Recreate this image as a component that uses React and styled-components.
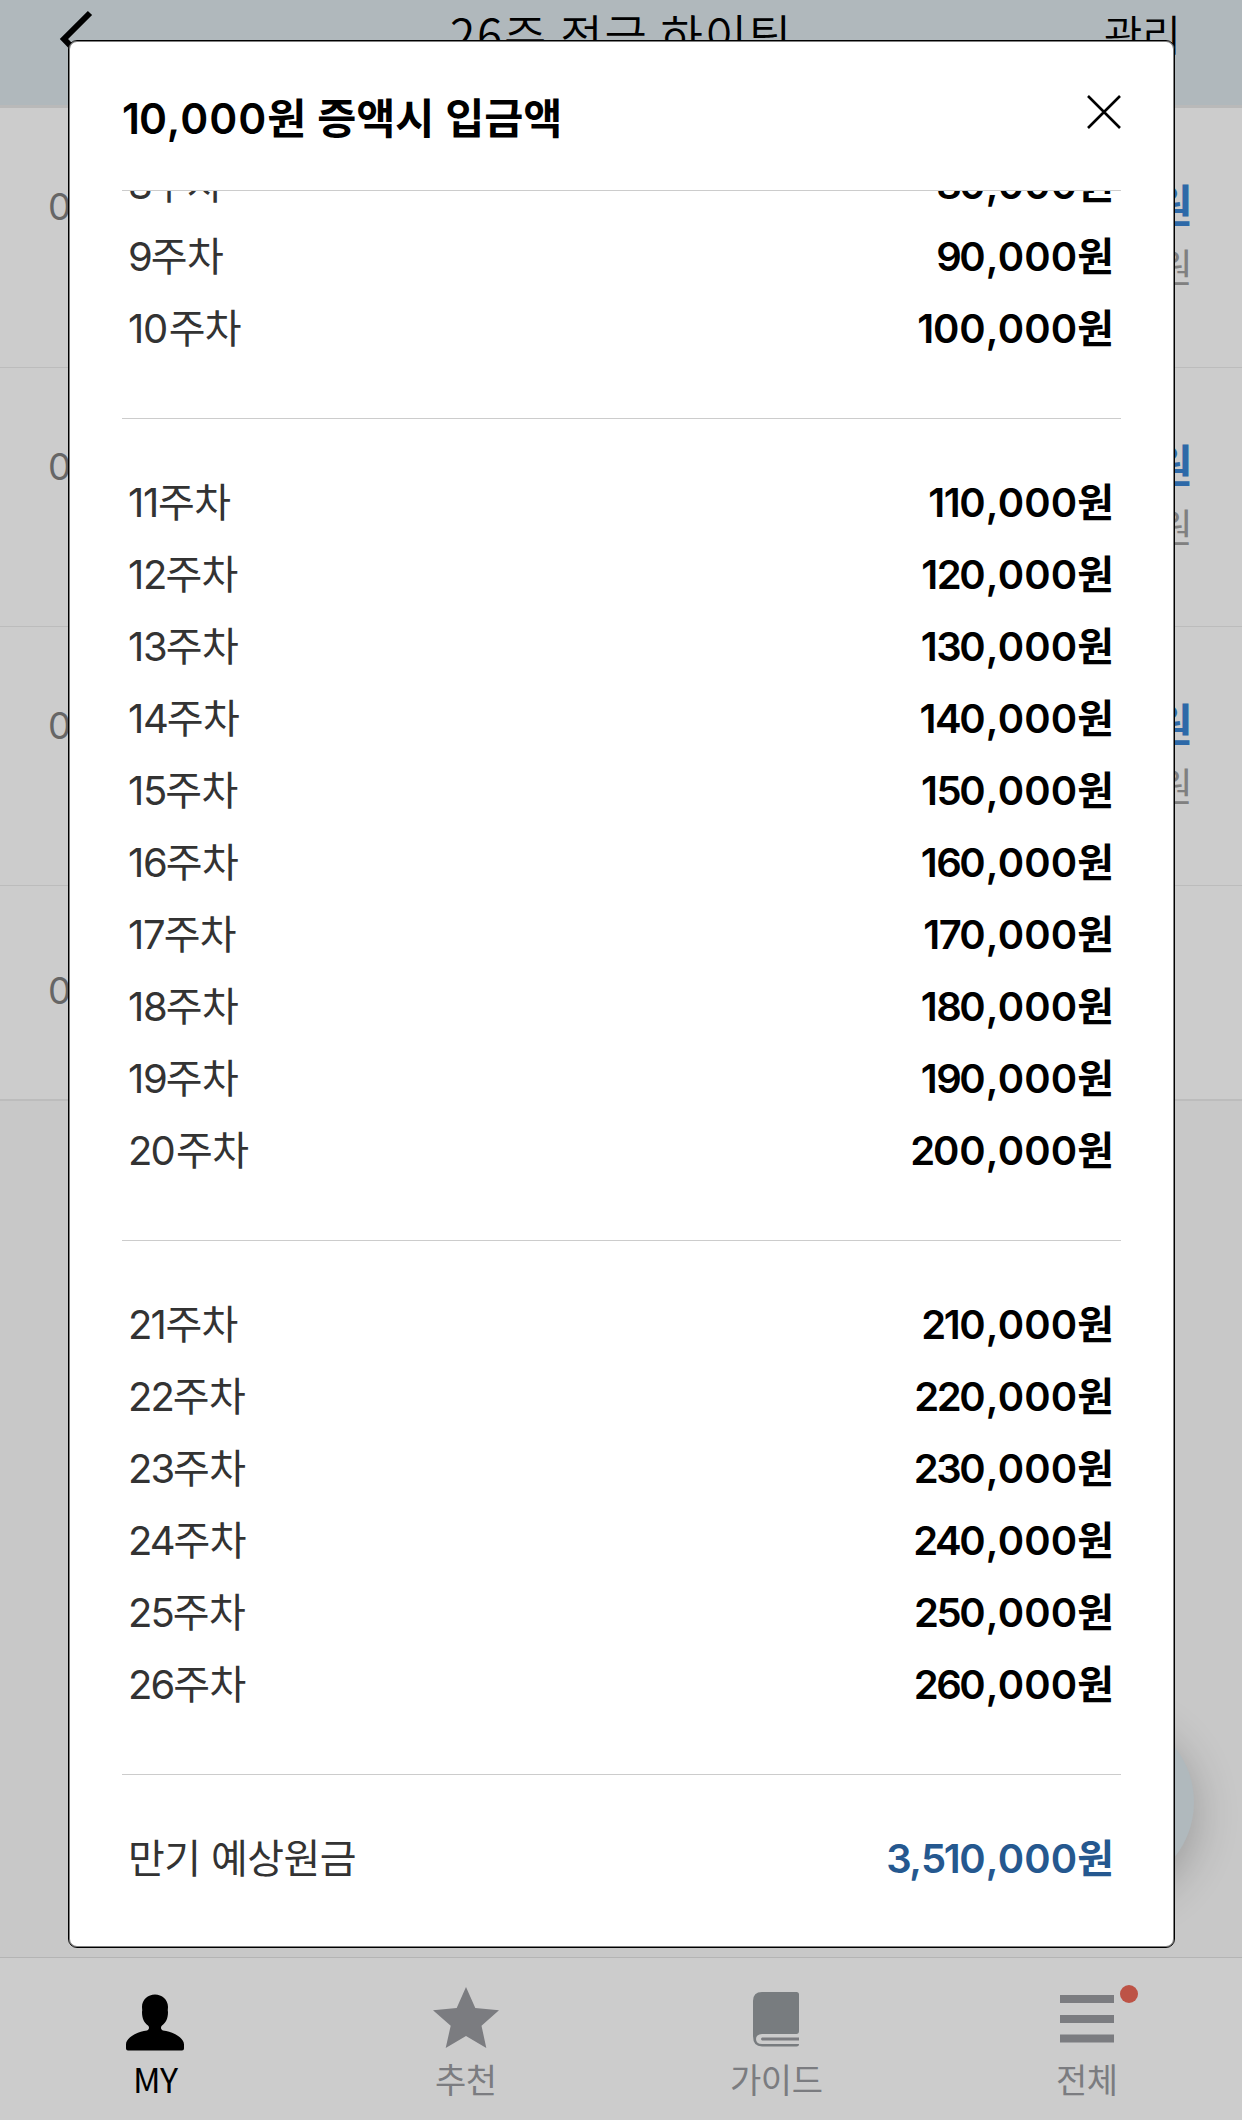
import styled, { createGlobalStyle } from 'styled-components';

const LIST_ROWS = [
  { height: 260, date: '0', amount: true },
  { height: 259, date: '0', amount: true },
  { height: 259, date: '0', amount: true },
  { height: 215, date: '0', amount: false },
];

const GROUPS = [
  [8, 9, 10],
  [11, 12, 13, 14, 15, 16, 17, 18, 19, 20],
  [21, 22, 23, 24, 25, 26],
];

const STEP = 10000;

// digits and hangul need their own tracking
function Text({ children }) {
  return children
    .split(/(1|0+|[2-9]+|,)/)
    .filter(Boolean)
    .map((part, i) => {
      if (part === '1') return <One key={i}>{part}</One>;
      if (part === ',') return <Comma key={i}>{part}</Comma>;
      if (/^0/.test(part)) return <Zeros key={i}>{part}</Zeros>;
      if (/\d/.test(part)) return <Digits key={i}>{part}</Digits>;
      return part;
    });
}

function App() {
  return (
    <Screen>
      <GlobalStyle />
      <Header>
        <BackIcon viewBox="0 0 40 60">
          <path d="M34 3 L8 29 L34 56" />
        </BackIcon>
        <HeaderTitle>26주 적금 하이팅</HeaderTitle>
        <Manage>관리</Manage>
      </Header>
      <List>
        {LIST_ROWS.map(({ height, date, amount }, i) => (
          <ListRow key={i} $height={height}>
            <ListDate>{date}</ListDate>
            {amount && (
              <ListAmounts>
                <Deposit>원</Deposit>
                <Balance>원</Balance>
              </ListAmounts>
            )}
          </ListRow>
        ))}
      </List>
      <Fab />
      <Nav />
      <Modal>
        <ModalHeader>
          <ModalTitle>
            <Text>10,000원 증액시 입금액</Text>
          </ModalTitle>
          <CloseIcon viewBox="0 0 34 34">
            <path d="M1 1 L33 33 M33 1 L1 33" />
          </CloseIcon>
        </ModalHeader>
        <ModalBody>
          {GROUPS.map((weeks) => (
            <Group key={weeks[0]}>
              {weeks.map((week) => (
                <WeekRow key={week}>
                  <Label>
                    <Text>{`${week}주차`}</Text>
                  </Label>
                  <Amount>
                    <Text>{`${(week * STEP).toLocaleString('en-US')}원`}</Text>
                  </Amount>
                </WeekRow>
              ))}
            </Group>
          ))}
          <TotalRow>
            <Label>만기 예상원금</Label>
            <Amount $total>
              <Text>3,510,000원</Text>
            </Amount>
          </TotalRow>
        </ModalBody>
      </Modal>
    </Screen>
  );
}

function Nav() {
  return (
    <NavBar>
      <NavItem $active>
        <NavIcon viewBox="0 0 66 66">
          <path d="M33 7.500C40 7.500 46 12.500 46 20C46 22 45.500 23 46 25C46 32 43.500 36 40 38.500C38.500 40 38.500 42.500 41 43.500C52 45 62 51 62 57.500V61.500Q62 63.500 60 63.500H6Q4 63.500 4 61.500V57.500C4 51 14 45 25 43.500C27.500 42.500 27.500 40 26 38.500C22.500 36 20 32 20 25C20.500 23 20 22 20 20C20 12.500 26 7.500 33 7.500Z" />
        </NavIcon>
        <NavLabel>MY</NavLabel>
      </NavItem>
      <NavItem>
        <NavIcon viewBox="0 0 66 66">
          <path d="M33 0L42.300 21L66 23.200L48.500 38.700L53.300 61L33 49L12.700 61L17.700 38.700L0 23.200L23.700 21Z" />
        </NavIcon>
        <NavLabel>추천</NavLabel>
      </NavItem>
      <NavItem>
        <NavIcon viewBox="0 0 66 66">
          <path
            fill="#787c7f"
            d="M19 5H53.500Q56 5 56 7.500V44Q56 47 53.500 47H19Q13 47.500 13 52Q13 57 19 57H56Q56 59.500 53.500 59.500H19Q10 59.500 10 49V14Q10 5 19 5Z"
          />
          <path d="M19 50.500H56V53.500H19Q17 52 19 50.500Z" />
        </NavIcon>
        <NavLabel>가이드</NavLabel>
      </NavItem>
      <NavItem>
        <NavIcon viewBox="0 0 66 66">
          <path d="M6 8H60V16H6ZM6 28H60V36H6ZM6 47.500H60V55.500H6Z" />
        </NavIcon>
        <NavLabel>전체</NavLabel>
        <NavDot />
      </NavItem>
    </NavBar>
  );
}

export default App;

const GlobalStyle = createGlobalStyle`
  * {
    box-sizing: border-box;
  }

  body {
    margin: 0;
    font-family: Inter, 'Noto Sans CJK KR', sans-serif;
    color: #000;
  }
`;

const Screen = styled.div`
  position: relative;
  display: flex;
  flex-direction: column;
  width: 1242px;
  height: 2120px;
  background-color: #c8c8c8;
  overflow: hidden;
`;

const Header = styled.header`
  display: grid;
  grid-template-columns: 1fr auto 1fr;
  align-items: start;
  height: 108px;
  padding: 5px 61px 0 56px;
  background-color: #b0b8bc;
  border-bottom: 3px solid #b9b9b9;
`;

const BackIcon = styled.svg`
  width: 40px;
  height: 60px;
  margin-top: 5px;
  fill: none;
  stroke: #000;
  stroke-width: 6;
`;

const HeaderTitle = styled.h1`
  margin: -2px 0 0;
  padding-left: 6px;
  font-family: 'Noto Sans CJK KR', sans-serif;
  font-size: 46px;
  font-weight: 350;
  line-height: 60px;
  letter-spacing: 1.8px;
`;

const Manage = styled.span`
  justify-self: end;
  font-size: 42px;
  font-weight: 350;
  line-height: 62px;
`;

const List = styled.div`
  display: flex;
  flex-direction: column;
`;

const ListRow = styled.div`
  display: flex;
  justify-content: space-between;
  height: ${({ $height }) => $height}px;
  padding: 69px 49px 0 48px;
  background-color: #ccc;
  border-bottom: 1px solid #bcbcbc;

  &:last-child {
    padding-top: 75px;
    border-bottom: 2px solid #bcbcbc;
  }
`;

const ListDate = styled.span`
  font-size: 37px;
  font-weight: 400;
  line-height: 60px;
  color: #666;
`;

const ListAmounts = styled.div`
  display: flex;
  flex-direction: column;
  align-items: flex-end;
`;

const Deposit = styled.span`
  font-size: 45px;
  font-weight: 700;
  line-height: 60px;
  color: #2d69a8;
`;

const Balance = styled.span`
  font-size: 39px;
  line-height: 62px;
  color: #808080;
`;

const Fab = styled.div`
  position: absolute;
  top: 1714px;
  left: 1018px;
  width: 176px;
  height: 176px;
  border-radius: 50%;
  background-color: #b0b9bd;
  box-shadow: 0 12px 46px rgba(0, 0, 0, 0.24);
`;

const NavBar = styled.nav`
  display: grid;
  grid-template-columns: repeat(4, 1fr);
  height: 163px;
  margin-top: auto;
  border-top: 1px solid #b4b4b4;
  background-color: #ccc;
  z-index: 1;
`;

const NavItem = styled.div`
  position: relative;
  display: flex;
  flex-direction: column;
  align-items: center;
  padding-top: 29px;
  color: ${({ $active }) => ($active ? '#000' : '#7b7c80')};
`;

const NavIcon = styled.svg`
  width: 66px;
  height: 66px;
  fill: currentColor;
`;

const NavLabel = styled.span`
  margin-top: 1px;
  font-family: 'Noto Sans CJK KR', sans-serif;
  font-size: 34px;
  line-height: 50px;
  letter-spacing: -0.5px;
`;

const NavDot = styled.i`
  position: absolute;
  top: 27px;
  left: 188px;
  width: 18px;
  height: 18px;
  border-radius: 50%;
  background-color: #bd5346;
`;

const Modal = styled.section`
  position: absolute;
  top: 40px;
  left: 68px;
  z-index: 2;
  display: flex;
  flex-direction: column;
  width: 1107px;
  height: 1908px;
  padding: 0 53px;
  border: 1px solid #000;
  border-radius: 9px;
  background-color: #fff;
  box-shadow: inset 0 0 0 1px #808080;
`;

const ModalHeader = styled.div`
  display: flex;
  justify-content: space-between;
  height: 150px;
  border-bottom: 1px solid #ccc;
`;

const ModalTitle = styled.h2`
  margin: 48px 0 0;
  font-size: 42.500px;
  font-weight: 600;
  line-height: 60px;
`;

const CloseIcon = styled.svg`
  width: 34px;
  height: 34px;
  margin-top: 54px;
  fill: none;
  stroke: #000;
  stroke-width: 2.6;
`;

const ModalBody = styled.div`
  display: flex;
  flex-direction: column;
  justify-content: flex-end;
  flex: 1;
  min-height: 0;
  overflow: hidden;
`;

const Group = styled.div`
  flex: none;
  padding: 45px 0 56px;
  border-bottom: 1px solid #ccc;
`;

const WeekRow = styled.div`
  display: flex;
  justify-content: space-between;
  align-items: center;
  height: 72px;
  padding: 0 7px 0 6px;
`;

const TotalRow = styled(WeekRow)`
  flex: none;
  height: 172px;
  padding-bottom: 10px;
`;

const Label = styled.span`
  font-size: 40px;
  font-weight: 400;
  letter-spacing: -0.6px;
  color: #333;
`;

const Amount = styled.strong`
  font-size: 40px;
  font-weight: 600;
  color: ${({ $total }) => ($total ? '#25588f' : '#000')};
`;

const Digits = styled.span`
  letter-spacing: 1px;

  ${Label} & {
    font-weight: 380;
    letter-spacing: -2px;
  }

  ${Amount} & {
    font-weight: 560;
    letter-spacing: -2.4px;
  }
`;

const Zeros = styled(Digits)`
  ${Label} && {
    letter-spacing: 0.4px;
  }

  ${Amount} && {
    letter-spacing: 0.1px;
  }
`;

const One = styled.span`
  letter-spacing: -1px;

  ${Label} & {
    font-weight: 380;
    letter-spacing: -1.3px;
  }

  ${Amount} & {
    font-weight: 560;
    letter-spacing: -1.4px;
  }
`;

const Comma = styled.span`
  letter-spacing: 1px;

  ${Amount} & {
    font-weight: 560;
    letter-spacing: -0.9px;
  }
`;
